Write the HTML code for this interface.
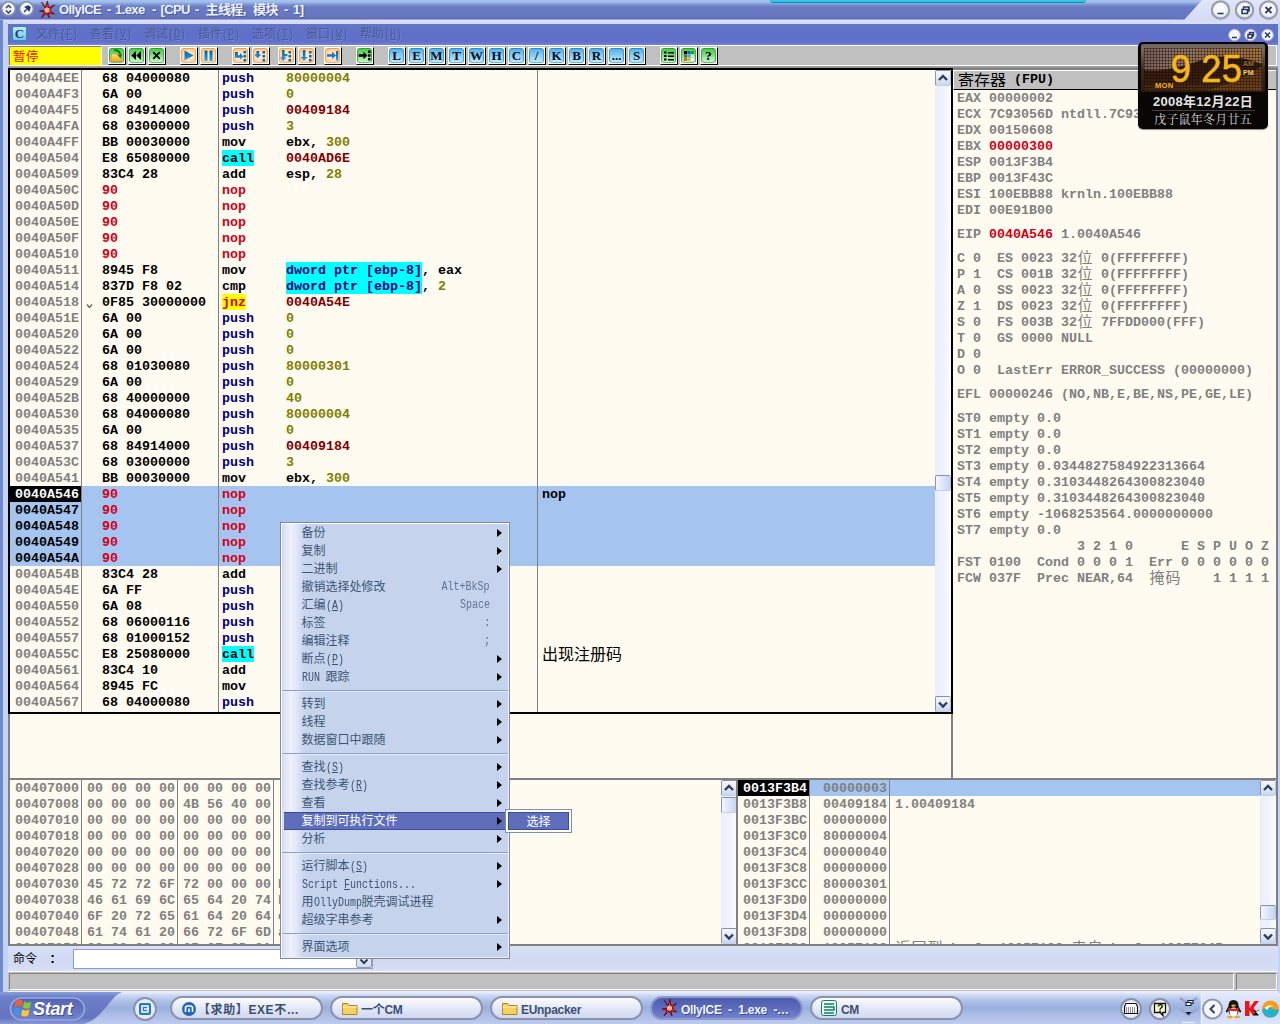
<!DOCTYPE html>
<html lang="zh-CN"><head><meta charset="utf-8"><title>OllyICE - 1.exe - [CPU - 主线程, 模块 - 1]</title>
<style>
*{margin:0;padding:0;box-sizing:border-box}
html,body{width:1280px;height:1024px;overflow:hidden}
body{position:relative;background:#c9d3f5;font-family:"Liberation Sans","Noto Sans CJK SC",sans-serif;font-size:12px;color:#000}
.a{position:absolute}
.m{position:absolute;white-space:pre;font-family:"Liberation Mono","Noto Sans CJK SC",monospace;font-weight:bold;font-size:13.3333px;letter-spacing:0;line-height:16px;height:16px}
.g{color:#808080}.k{color:#000}.b{color:#000080}.o{color:#808000}.d{color:#800000}.r{color:#d40018}.rr{color:#e00000}
.cy{background:#00ffff}.ye{background:#ffff00}
.wh{color:#fff}
.cj{position:relative;top:-2px;display:inline-block;width:16px;font-family:"Noto Sans CJK SC",sans-serif;font-weight:400;font-size:15px;letter-spacing:1px;padding-left:0.5px;text-align:left;overflow:hidden;line-height:16px;vertical-align:top}
.pane{position:absolute;background:#fffbf0;overflow:hidden}
.vl{position:absolute;width:1px;background:#808080}
.tb{position:absolute;top:47px;width:18px;height:18px;border:1px solid;border-color:#fff #000 #000 #fff;overflow:hidden;background:#fff}
.tb i{position:absolute;left:0;top:0;right:1px;bottom:1px;border-radius:3px;border:1px solid}
.tg i{background:linear-gradient(#50c850,#78d878 40%,#b4ecb4 80%,#c8f2c8);border-color:#2ca42c #40b040 #68c468}
.to i{background:radial-gradient(circle at 50% 55%,#fef0e0 0,#fcdcb8 55%,#f8bc84 100%);border-color:#f0a048 #f2a858 #f4b470}
.tl i{background:linear-gradient(#58b0e4,#80c8f0 40%,#b0e0fa 85%,#c0e8fc);border-color:#2c8cd0 #409cd8 #68b8e8}
.tb b{position:absolute;left:0;top:0;width:15px;height:15px;text-align:center;font-family:"Liberation Serif",serif;font-weight:bold;font-size:13px;line-height:15px;color:#081020}
.sb{position:absolute;width:16px;background:linear-gradient(90deg,#eceefd,#eef2ff 50%,#fcfcff)}
.sbb{position:absolute;left:0;width:16px;height:16px;border:1px solid;border-color:#8890a8 #b4c0dc #c4d0e8 #8c94ac;border-radius:2px;background:linear-gradient(#f6f8fe,#e4eaf8 50%,#c8d6ee)}
.mi{position:absolute;left:20.500px;height:18px;line-height:18px;font-size:12px;color:#3c5474;white-space:pre;font-family:"Liberation Sans","Noto Sans CJK SC",sans-serif}
.mk{position:absolute;right:19px;height:18px;line-height:18px;font-size:12px;color:#5c7494;white-space:pre;font-family:"Liberation Mono",monospace;transform:scaleX(.8333);transform-origin:100% 50%}
.l{display:inline-block;font-family:"Liberation Mono",monospace;font-size:12px;letter-spacing:0;transform:scaleX(.8333);transform-origin:0 50%}
.ma{position:absolute;left:216px;width:0;height:0;border:4px solid transparent;border-left:5px solid #000;border-right:0}
.ms{position:absolute;left:1px;right:1px;height:2px;border-top:1px solid #8ca0c4;border-bottom:1px solid #e4ecfc}
.task{position:absolute;top:996px;height:24px;width:153px;border:2px solid #8a92ac;border-radius:12px;background:linear-gradient(#fcfcff,#e4e8f8 50%,#d0d8f0);font-weight:bold;font-size:12px;color:#3c5070;line-height:20px;white-space:pre;overflow:hidden}
.task span{position:absolute;left:29px;top:1.500px;letter-spacing:-0.3px}
</style></head><body>
<div class="a" style="left:0px;top:0px;width:1280px;height:24px;background:linear-gradient(#a4c4f0 0,#a0bcec 2px,#7890cc 5px,#6a7cc4 7px,#6676c0 17px,#5c6cb0 19px,#dcdffa 20px,#d4d8f6 24px)"></div>
<div class="a" style="left:770px;top:0px;width:316px;height:3px;background:#30c8e8;border-bottom:1px solid #1088b0;border-radius:0 0 4px 4px"></div>
<svg class="a" style="left:1170px;top:0" width="110" height="24" viewBox="0 0 110 24"><defs><linearGradient id="tg1" x1="0" y1="0" x2="0" y2="1"><stop offset="0" stop-color="#e2e6fa"/><stop offset="0.800" stop-color="#d6daf5"/><stop offset="1" stop-color="#dcdffa"/></linearGradient><radialGradient id="cb" cx="0.5" cy="0.4" r="0.6"><stop offset="0" stop-color="#ffffff"/><stop offset="0.7" stop-color="#f0f2fa"/><stop offset="1" stop-color="#c8cce0"/></radialGradient></defs><path d="M14 20 L32 0 L110 0 L110 24 L0 24 L0 20 Z" fill="url(#tg1)"/><g stroke="#9a9eac" stroke-width="2.200" fill="url(#cb)"><circle cx="50.500" cy="10" r="8.700"/><circle cx="74.500" cy="10" r="8.700"/><circle cx="98.500" cy="10" r="8.700"/></g><g stroke="#283868" stroke-width="1.6" fill="none"><path d="M47.5 13.5h6"/><path d="M72 9.5h5.5v4H72z M73.5 9.5v-2.5h5.5v4h-1.500"/><path d="M95.500 7l6 6m0 -6l-6 6" stroke-width="1.800"/></g></svg>
<svg class="a" style="left:0;top:0" width="60" height="22" viewBox="0 0 60 22"><g stroke="#868ea6" stroke-width="1.600" fill="#f2f4fb"><circle cx="8.500" cy="8.700" r="6.900"/><circle cx="26.500" cy="8.700" r="6.900"/></g><path d="M6 8l2.500 -2.500l2.500 2.500M6 10.500l2.500 2.500l2.500 -2.500" stroke="#283868" stroke-width="1.400" fill="none"/><path d="M24 12l2.500 -2.500M25.500 7l3.500 3.500l1 -3l-1.500 -1.500z" stroke="#283868" stroke-width="1.400" fill="#283868"/><g transform="translate(46.500,10)"><path d="M0 0L-5 -8L-1 -2L1 -9L2 -2L8 -5L3 0L8 4L2 3L3 8L0 3L-5 8L-2 2L-7 1Z" fill="#e83030" stroke="#701010" stroke-width="1"/><circle cx="0.500" cy="0" r="2.500" fill="#ffb0a0"/></g></svg>
<div class="a" style="left:0;top:0;width:330px;height:20px;line-height:19px;font-size:13px;font-weight:bold;color:#f0f2fc;text-shadow:1px 1px 0 #4a5a9c;white-space:pre;letter-spacing:-0.600px"><span class="a" style="left:59px;top:0">OllyICE</span><span class="a" style="left:107px;top:0">-</span><span class="a" style="left:115px;top:0">1.exe</span><span class="a" style="left:152px;top:0">-</span><span class="a" style="left:160.5px;top:0">[CPU</span><span class="a" style="left:195px;top:0">-</span><span class="a" style="left:205.5px;top:0">主线程,</span><span class="a" style="left:253px;top:0">模块</span><span class="a" style="left:284px;top:0">-</span><span class="a" style="left:293px;top:0">1]</span></div>
<div class="a" style="left:0px;top:20px;width:3px;height:975px;background:#7088cc"></div>
<div class="a" style="left:3px;top:22px;width:5px;height:972px;background:#c4d2f6"></div>
<div class="a" style="left:1278px;top:22px;width:2px;height:972px;background:#c4d2f6"></div>
<div class="a" style="left:8px;top:24px;width:1270px;height:21px;background:linear-gradient(#6474c4,#6070c8 50%,#6270cc 85%,#7484d0)"></div>
<div class="a" style="left:12px;top:26px;width:15px;height:15px;border-radius:2px;border:1px solid #3088c0;background:linear-gradient(#c0ecfc,#70c4ec);font-family:'Liberation Serif',serif;font-weight:bold;font-size:13px;line-height:13px;text-align:center;color:#18406c">C</div>
<div class="a" style="left:36px;top:25px;height:18px;line-height:18px;font-size:12px;color:#4a5a98;white-space:pre;text-shadow:1px 1px 0 #7484d0">文件<span class="l" style="margin-right:-3.6px">(<u>F</u>)</span></div>
<div class="a" style="left:90px;top:25px;height:18px;line-height:18px;font-size:12px;color:#4a5a98;white-space:pre;text-shadow:1px 1px 0 #7484d0">查看<span class="l" style="margin-right:-3.6px">(<u>V</u>)</span></div>
<div class="a" style="left:144px;top:25px;height:18px;line-height:18px;font-size:12px;color:#4a5a98;white-space:pre;text-shadow:1px 1px 0 #7484d0">调试<span class="l" style="margin-right:-3.6px">(<u>D</u>)</span></div>
<div class="a" style="left:198px;top:25px;height:18px;line-height:18px;font-size:12px;color:#4a5a98;white-space:pre;text-shadow:1px 1px 0 #7484d0">插件<span class="l" style="margin-right:-3.6px">(<u>P</u>)</span></div>
<div class="a" style="left:252px;top:25px;height:18px;line-height:18px;font-size:12px;color:#4a5a98;white-space:pre;text-shadow:1px 1px 0 #7484d0">选项<span class="l" style="margin-right:-3.6px">(<u>T</u>)</span></div>
<div class="a" style="left:306px;top:25px;height:18px;line-height:18px;font-size:12px;color:#4a5a98;white-space:pre;text-shadow:1px 1px 0 #7484d0">窗口<span class="l" style="margin-right:-3.6px">(<u>W</u>)</span></div>
<div class="a" style="left:360px;top:25px;height:18px;line-height:18px;font-size:12px;color:#4a5a98;white-space:pre;text-shadow:1px 1px 0 #7484d0">帮助<span class="l" style="margin-right:-3.6px">(<u>H</u>)</span></div>
<svg class="a" style="left:1222px;top:25px" width="56" height="20" viewBox="0 0 56 20"><g stroke="#a8b0dc" stroke-width="1" fill="#f6f8ff"><circle cx="12.500" cy="10" r="5.800"/><circle cx="28.500" cy="10" r="5.800"/><circle cx="45.500" cy="10" r="5.800"/></g><g stroke="#283868" stroke-width="1.500" fill="none"><path d="M10 12.500h5"/><path d="M26 9.500h4v3.500h-4zM27.500 9.500v-2h4v3.500h-1.500"/><path d="M43 7.500l5 5m0 -5l-5 5"/></g></svg>
<div class="a" style="left:8px;top:45px;width:1270px;height:23px;background:linear-gradient(#c0c0c0 0,#c0c0c0 21px,#a8a8a8 21px,#909090 23px)"></div>
<div class="a" style="left:8px;top:45px;width:1269px;height:21px;border:1px solid #fff;border-left:0"></div>
<div class="a" style="left:9px;top:46px;width:93px;height:20px;background:#ffff00;border:1px solid;border-color:#808080 #fff #fff #808080"><div class="a" style="left:3px;top:0;font-size:12.500px;line-height:18px;color:#f01000;font-family:'Noto Sans CJK SC',sans-serif;letter-spacing:0.500px">暂停</div></div>
<svg width="0" height="0" style="position:absolute"><defs><linearGradient id="bl" x1="0" y1="0" x2="0" y2="1"><stop offset="0" stop-color="#0c6494"/><stop offset="0.600" stop-color="#1c84cc"/><stop offset="1" stop-color="#44a8ec"/></linearGradient><linearGradient id="fy" x1="0" y1="0" x2="0" y2="1"><stop offset="0" stop-color="#fce070"/><stop offset="1" stop-color="#f0a828"/></linearGradient></defs></svg><div class="tb tg" style="left:108px"><i></i><svg class="a" style="left:0;top:0" width="16" height="16" viewBox="0 0 16 16"><path d="M2 13.500V7.500q0 -2 2 -2h2.500l4 3.500h2.500v4.500z" fill="url(#fy)" stroke="#c89020" stroke-width="0.800"/><path d="M5 2.500q4.500 -1 6.500 4" stroke="#0c7810" stroke-width="2" fill="none"/><path d="M8.500 6.500h5l-2 3.500z" fill="#0c7810"/></svg></div><div class="tb tg" style="left:128px"><i></i><svg class="a" style="left:0;top:0" width="16" height="16" viewBox="0 0 16 16"><path d="M7 3v9L2.300 7.500zM12 3v9L7.300 7.500z" fill="#000"/></svg></div><div class="tb tg" style="left:148px"><i></i><svg class="a" style="left:0;top:0" width="16" height="16" viewBox="0 0 16 16"><path d="M4.200 4.200l6.600 6.600m0 -6.600l-6.600 6.600" stroke="#000" stroke-width="1.700"/></svg></div><div class="tb to" style="left:180px"><i></i><svg class="a" style="left:0;top:0" width="16" height="16" viewBox="0 0 16 16"><path d="M3.500 2.500v10l9 -5z" fill="url(#bl)"/></svg></div><div class="tb to" style="left:200px"><i></i><svg class="a" style="left:0;top:0" width="16" height="16" viewBox="0 0 16 16"><path d="M3.500 2.500h3v10.500h-3zM8.500 2.500h3v10.500h-3z" fill="url(#bl)"/></svg></div><div class="tb to" style="left:232px"><i></i><svg class="a" style="left:0;top:0" width="16" height="16" viewBox="0 0 16 16"><path d="M10.5 3h2.500v2.500h-2.500zM10.5 7h2.500v2.500h-2.500zM10.5 11h2.500v2.500h-2.500z" fill="#0c6ca8"/><path d="M2 4h2.800v3.200h2.200V5l3.300 3.500L7 12V9.800H2z" fill="url(#bl)"/></svg></div><div class="tb to" style="left:252px"><i></i><svg class="a" style="left:0;top:0" width="16" height="16" viewBox="0 0 16 16"><path d="M9.5 3h2.500v2.500h-2.500zM9.5 7h2.500v2.500h-2.500zM9.5 11h2.500v2.500h-2.500z" fill="#0c6ca8"/><path d="M3.500 3h2.600v3.500h2.200L4.800 10.500L1.300 6.500h2.200z" fill="url(#bl)"/></svg></div><div class="tb to" style="left:278px"><i></i><svg class="a" style="left:0;top:0" width="16" height="16" viewBox="0 0 16 16"><path d="M9.5 3h2.500v2.500h-2.500zM9.5 7h2.500v2.500h-2.500zM9.5 11h2.500v2.500h-2.500z" fill="#0c6ca8"/><path d="M3 2h2.500v4h3v2.300h-3v1.200h2L4.200 13L1 9.500h2z" fill="url(#bl)"/></svg></div><div class="tb to" style="left:298px"><i></i><svg class="a" style="left:0;top:0" width="16" height="16" viewBox="0 0 16 16"><path d="M10 3h2.500v2.500h-2.500zM10 7h2.500v2.500h-2.500zM10 11h2.500v2.500h-2.500z" fill="#0c6ca8"/><path d="M3.800 2h2.600v7h2.200L5 13L1.600 9h2.200z" fill="url(#bl)"/></svg></div><div class="tb to" style="left:324px"><i></i><svg class="a" style="left:0;top:0" width="16" height="16" viewBox="0 0 16 16"><path d="M2 6.300h5V3.800l4 3.700l-4 3.700V8.700H2zM11 3h2.200v9.500H11z" fill="url(#bl)"/></svg></div><div class="tb tg" style="left:356px"><i></i><svg class="a" style="left:0;top:0" width="16" height="16" viewBox="0 0 16 16"><path d="M1.500 6.300h5V3.800l4 3.700l-4 3.700V8.700h-5z" fill="#000"/><path d="M11 2.500h2.500v2.500H11zM11 6.300h2.500v2.500H11zM11 10h2.500v2.500H11z" fill="#000"/></svg></div><div class="tb tl" style="left:388px"><i></i><b>L</b></div><div class="tb tl" style="left:408px"><i></i><b>E</b></div><div class="tb tl" style="left:428px"><i></i><b>M</b></div><div class="tb tl" style="left:448px"><i></i><b>T</b></div><div class="tb tl" style="left:468px"><i></i><b>W</b></div><div class="tb tl" style="left:488px"><i></i><b>H</b></div><div class="tb tl" style="left:508px"><i></i><b>C</b></div><div class="tb tl" style="left:528px"><i></i><b>/</b></div><div class="tb tl" style="left:548px"><i></i><b>K</b></div><div class="tb tl" style="left:568px"><i></i><b>B</b></div><div class="tb tl" style="left:588px"><i></i><b>R</b></div><div class="tb tl" style="left:608px"><i></i><b>...</b></div><div class="tb tl" style="left:628px"><i></i><b>S</b></div><div class="tb tg" style="left:660px"><i></i><svg class="a" style="left:0;top:0" width="16" height="16" viewBox="0 0 16 16"><path d="M3 3.500h2.500v2H3zM3 7h2.500v2H3zM3 10.500h2.500v2H3zM7 4h6v1.500H7zM7 7.500h6V9H7zM7 11h6v1.500H7z" fill="#000"/></svg></div><div class="tb tg" style="left:680px"><i></i><svg class="a" style="left:0;top:0" width="16" height="16" viewBox="0 0 16 16"><path d="M3 3h3v3H3z" fill="#000"/><path d="M6.500 3h3v3h-3z" fill="#2060c0"/><path d="M10 3h3v3h-3z" fill="#20a020"/><path d="M3 6.500h3v3H3z" fill="#606060"/><path d="M6.500 6.500h3v3h-3z" fill="#40b0e0"/><path d="M10 6.500h3v3h-3z" fill="#e0e0e0"/><path d="M3 10h3v3H3z" fill="#e06020"/><path d="M6.500 10h3v3h-3z" fill="#e0c020"/><path d="M10 10h3v3h-3z" fill="#fff"/></svg></div><div class="tb tg" style="left:700px"><i></i><b style="color:#000">?</b></div>
<div class="a" style="left:8px;top:68px;width:945px;height:646px;background:#000"></div>
<div class="pane" style="left:10px;top:70px;width:925px;height:642px"><div class="a" style="left:0;top:416px;width:925px;height:80px;background:#a5c5f0"></div><div class="a" style="left:0;top:416px;width:71px;height:16px;background:#000"></div><div class="vl" style="left:71px;top:0;height:642px"></div><div class="vl" style="left:208px;top:0;height:642px"></div><div class="vl" style="left:527px;top:0;height:642px"></div><div class="m g" style="left:5px;top:1px;">0040A4EE</div><div class="m k" style="left:92px;top:1px;">68 04000080</div><div class="m k" style="left:212px;top:1px;"><span class="b">push</span></div><div class="m k" style="left:276px;top:1px;"><span class="o">80000004</span></div>
<div class="m g" style="left:5px;top:17px;">0040A4F3</div><div class="m k" style="left:92px;top:17px;">6A 00</div><div class="m k" style="left:212px;top:17px;"><span class="b">push</span></div><div class="m k" style="left:276px;top:17px;"><span class="o">0</span></div>
<div class="m g" style="left:5px;top:33px;">0040A4F5</div><div class="m k" style="left:92px;top:33px;">68 84914000</div><div class="m k" style="left:212px;top:33px;"><span class="b">push</span></div><div class="m k" style="left:276px;top:33px;"><span class="d">00409184</span></div>
<div class="m g" style="left:5px;top:49px;">0040A4FA</div><div class="m k" style="left:92px;top:49px;">68 03000000</div><div class="m k" style="left:212px;top:49px;"><span class="b">push</span></div><div class="m k" style="left:276px;top:49px;"><span class="o">3</span></div>
<div class="m g" style="left:5px;top:65px;">0040A4FF</div><div class="m k" style="left:92px;top:65px;">BB 00030000</div><div class="m k" style="left:212px;top:65px;"><span class="k">mov</span></div><div class="m k" style="left:276px;top:65px;"><span class="k">ebx, </span><span class="o">300</span></div>
<div class="m g" style="left:5px;top:81px;">0040A504</div><div class="m k" style="left:92px;top:81px;">E8 65080000</div><div class="a cy" style="left:212px;top:80px;width:32px;height:16px"></div><div class="m k" style="left:212px;top:81px;"><span class="k">call</span></div><div class="m k" style="left:276px;top:81px;"><span class="d">0040AD6E</span></div>
<div class="m g" style="left:5px;top:97px;">0040A509</div><div class="m k" style="left:92px;top:97px;">83C4 28</div><div class="m k" style="left:212px;top:97px;"><span class="k">add</span></div><div class="m k" style="left:276px;top:97px;"><span class="k">esp, </span><span class="o">28</span></div>
<div class="m g" style="left:5px;top:113px;">0040A50C</div><div class="m r" style="left:92px;top:113px;">90</div><div class="m k" style="left:212px;top:113px;"><span class="r">nop</span></div>
<div class="m g" style="left:5px;top:129px;">0040A50D</div><div class="m r" style="left:92px;top:129px;">90</div><div class="m k" style="left:212px;top:129px;"><span class="r">nop</span></div>
<div class="m g" style="left:5px;top:145px;">0040A50E</div><div class="m r" style="left:92px;top:145px;">90</div><div class="m k" style="left:212px;top:145px;"><span class="r">nop</span></div>
<div class="m g" style="left:5px;top:161px;">0040A50F</div><div class="m r" style="left:92px;top:161px;">90</div><div class="m k" style="left:212px;top:161px;"><span class="r">nop</span></div>
<div class="m g" style="left:5px;top:177px;">0040A510</div><div class="m r" style="left:92px;top:177px;">90</div><div class="m k" style="left:212px;top:177px;"><span class="r">nop</span></div>
<div class="m g" style="left:5px;top:193px;">0040A511</div><div class="m k" style="left:92px;top:193px;">8945 F8</div><div class="m k" style="left:212px;top:193px;"><span class="k">mov</span></div><div class="a cy" style="left:276px;top:192px;width:136px;height:16px"></div><div class="m k" style="left:276px;top:193px;"><span class="b">dword ptr [ebp-8]</span><span class="k">, eax</span></div>
<div class="m g" style="left:5px;top:209px;">0040A514</div><div class="m k" style="left:92px;top:209px;">837D F8 02</div><div class="m k" style="left:212px;top:209px;"><span class="k">cmp</span></div><div class="a cy" style="left:276px;top:208px;width:136px;height:16px"></div><div class="m k" style="left:276px;top:209px;"><span class="b">dword ptr [ebp-8]</span><span class="k">, </span><span class="o">2</span></div>
<div class="m g" style="left:5px;top:225px;">0040A518</div><div class="m k" style="left:92px;top:225px;">0F85 30000000</div><div class="a ye" style="left:212px;top:224px;width:24px;height:16px"></div><div class="m k" style="left:212px;top:225px;"><span class="rr">jnz</span></div><div class="m k" style="left:276px;top:225px;"><span class="d">0040A54E</span></div>
<div class="m g" style="left:5px;top:241px;">0040A51E</div><div class="m k" style="left:92px;top:241px;">6A 00</div><div class="m k" style="left:212px;top:241px;"><span class="b">push</span></div><div class="m k" style="left:276px;top:241px;"><span class="o">0</span></div>
<div class="m g" style="left:5px;top:257px;">0040A520</div><div class="m k" style="left:92px;top:257px;">6A 00</div><div class="m k" style="left:212px;top:257px;"><span class="b">push</span></div><div class="m k" style="left:276px;top:257px;"><span class="o">0</span></div>
<div class="m g" style="left:5px;top:273px;">0040A522</div><div class="m k" style="left:92px;top:273px;">6A 00</div><div class="m k" style="left:212px;top:273px;"><span class="b">push</span></div><div class="m k" style="left:276px;top:273px;"><span class="o">0</span></div>
<div class="m g" style="left:5px;top:289px;">0040A524</div><div class="m k" style="left:92px;top:289px;">68 01030080</div><div class="m k" style="left:212px;top:289px;"><span class="b">push</span></div><div class="m k" style="left:276px;top:289px;"><span class="o">80000301</span></div>
<div class="m g" style="left:5px;top:305px;">0040A529</div><div class="m k" style="left:92px;top:305px;">6A 00</div><div class="m k" style="left:212px;top:305px;"><span class="b">push</span></div><div class="m k" style="left:276px;top:305px;"><span class="o">0</span></div>
<div class="m g" style="left:5px;top:321px;">0040A52B</div><div class="m k" style="left:92px;top:321px;">68 40000000</div><div class="m k" style="left:212px;top:321px;"><span class="b">push</span></div><div class="m k" style="left:276px;top:321px;"><span class="o">40</span></div>
<div class="m g" style="left:5px;top:337px;">0040A530</div><div class="m k" style="left:92px;top:337px;">68 04000080</div><div class="m k" style="left:212px;top:337px;"><span class="b">push</span></div><div class="m k" style="left:276px;top:337px;"><span class="o">80000004</span></div>
<div class="m g" style="left:5px;top:353px;">0040A535</div><div class="m k" style="left:92px;top:353px;">6A 00</div><div class="m k" style="left:212px;top:353px;"><span class="b">push</span></div><div class="m k" style="left:276px;top:353px;"><span class="o">0</span></div>
<div class="m g" style="left:5px;top:369px;">0040A537</div><div class="m k" style="left:92px;top:369px;">68 84914000</div><div class="m k" style="left:212px;top:369px;"><span class="b">push</span></div><div class="m k" style="left:276px;top:369px;"><span class="d">00409184</span></div>
<div class="m g" style="left:5px;top:385px;">0040A53C</div><div class="m k" style="left:92px;top:385px;">68 03000000</div><div class="m k" style="left:212px;top:385px;"><span class="b">push</span></div><div class="m k" style="left:276px;top:385px;"><span class="o">3</span></div>
<div class="m g" style="left:5px;top:401px;">0040A541</div><div class="m k" style="left:92px;top:401px;">BB 00030000</div><div class="m k" style="left:212px;top:401px;"><span class="k">mov</span></div><div class="m k" style="left:276px;top:401px;"><span class="k">ebx, </span><span class="o">300</span></div>
<div class="m wh" style="left:5px;top:417px;">0040A546</div><div class="m r" style="left:92px;top:417px;">90</div><div class="m k" style="left:212px;top:417px;"><span class="r">nop</span></div>
<div class="m k" style="left:5px;top:433px;">0040A547</div><div class="m r" style="left:92px;top:433px;">90</div><div class="m k" style="left:212px;top:433px;"><span class="r">nop</span></div>
<div class="m k" style="left:5px;top:449px;">0040A548</div><div class="m r" style="left:92px;top:449px;">90</div><div class="m k" style="left:212px;top:449px;"><span class="r">nop</span></div>
<div class="m k" style="left:5px;top:465px;">0040A549</div><div class="m r" style="left:92px;top:465px;">90</div><div class="m k" style="left:212px;top:465px;"><span class="r">nop</span></div>
<div class="m k" style="left:5px;top:481px;">0040A54A</div><div class="m r" style="left:92px;top:481px;">90</div><div class="m k" style="left:212px;top:481px;"><span class="r">nop</span></div>
<div class="m g" style="left:5px;top:497px;">0040A54B</div><div class="m k" style="left:92px;top:497px;">83C4 28</div><div class="m k" style="left:212px;top:497px;"><span class="k">add</span></div><div class="m k" style="left:276px;top:497px;"><span class="k">esp, </span><span class="o">28</span></div>
<div class="m g" style="left:5px;top:513px;">0040A54E</div><div class="m k" style="left:92px;top:513px;">6A FF</div><div class="m k" style="left:212px;top:513px;"><span class="b">push</span></div><div class="m k" style="left:276px;top:513px;"><span class="o">-1</span></div>
<div class="m g" style="left:5px;top:529px;">0040A550</div><div class="m k" style="left:92px;top:529px;">6A 08</div><div class="m k" style="left:212px;top:529px;"><span class="b">push</span></div><div class="m k" style="left:276px;top:529px;"><span class="o">8</span></div>
<div class="m g" style="left:5px;top:545px;">0040A552</div><div class="m k" style="left:92px;top:545px;">68 06000116</div><div class="m k" style="left:212px;top:545px;"><span class="b">push</span></div><div class="m k" style="left:276px;top:545px;"><span class="o">16010006</span></div>
<div class="m g" style="left:5px;top:561px;">0040A557</div><div class="m k" style="left:92px;top:561px;">68 01000152</div><div class="m k" style="left:212px;top:561px;"><span class="b">push</span></div><div class="m k" style="left:276px;top:561px;"><span class="o">52010001</span></div>
<div class="m g" style="left:5px;top:577px;">0040A55C</div><div class="m k" style="left:92px;top:577px;">E8 25080000</div><div class="a cy" style="left:212px;top:576px;width:32px;height:16px"></div><div class="m k" style="left:212px;top:577px;"><span class="k">call</span></div><div class="m k" style="left:276px;top:577px;"><span class="d">0040AD86</span></div>
<div class="m g" style="left:5px;top:593px;">0040A561</div><div class="m k" style="left:92px;top:593px;">83C4 10</div><div class="m k" style="left:212px;top:593px;"><span class="k">add</span></div><div class="m k" style="left:276px;top:593px;"><span class="k">esp, </span><span class="o">10</span></div>
<div class="m g" style="left:5px;top:609px;">0040A564</div><div class="m k" style="left:92px;top:609px;">8945 FC</div><div class="m k" style="left:212px;top:609px;"><span class="k">mov</span></div><div class="a cy" style="left:276px;top:608px;width:136px;height:16px"></div><div class="m k" style="left:276px;top:609px;"><span class="b">dword ptr [ebp-4]</span><span class="k">, eax</span></div>
<div class="m g" style="left:5px;top:625px;">0040A567</div><div class="m k" style="left:92px;top:625px;">68 04000080</div><div class="m k" style="left:212px;top:625px;"><span class="b">push</span></div><div class="m k" style="left:276px;top:625px;"><span class="o">80000004</span></div>
<svg class="a" style="left:76px;top:232px" width="8" height="8" viewBox="0 0 8 8"><path d="M1 2.500l2.500 3l2.500 -3" stroke="#606060" stroke-width="1.200" fill="none"/></svg><div class="m k" style="left:532px;top:417px;">nop</div><div class="a" style="left:532px;top:574px;height:18px;line-height:18px;font-size:16px;font-family:'Noto Sans CJK SC',sans-serif;color:#000;white-space:pre;letter-spacing:0">出现注册码</div></div>
<div class="sb" style="left:935px;top:70px;height:642px"><div class="sbb" style="top:0"><svg width="14" height="14" viewBox="0 0 14 14" style="position:absolute;left:0;top:0"><path d="M3 9l4 -4l4 4" stroke="#2c405c" stroke-width="2.400" fill="none"/></svg></div><div class="sbb" style="top:405px;height:16px;background:linear-gradient(90deg,#f4f6ff,#c8d4f4)"></div><div class="sbb" style="top:626px"><svg width="14" height="14" viewBox="0 0 14 14" style="position:absolute;left:0;top:0"><path d="M3 5.500l4 4l4 -4" stroke="#2c405c" stroke-width="2.400" fill="none"/></svg></div></div>
<div class="a" style="left:8px;top:714px;width:945px;height:64px;background:#fffbf0;border-left:2px solid #808080"></div>
<div class="a" style="left:951px;top:68px;width:327px;height:712px;background:#808080"></div>
<div class="a" style="left:951px;top:68px;width:2px;height:646px;background:#000"></div>
<div class="pane" style="left:953px;top:70px;width:323px;height:708px"><div class="a" style="left:0;top:0;width:323px;height:20px;background:#c0c0c0;border-top:1px solid #fff;border-left:1px solid #fff;border-bottom:1px solid #000"></div><div class="m k" style="left:5px;top:2px"><span class="cj k" style="width:48px;font-size:16px;top:-1px;letter-spacing:0;padding-left:0">寄存器</span> (FPU)</div><div class="m g" style="left:4px;top:21px;">EAX 00000002</div>
<div class="m g" style="left:4px;top:37px;">ECX 7C93056D ntdll.7C93056D</div>
<div class="m g" style="left:4px;top:53px;">EDX 00150608</div>
<div class="m g" style="left:4px;top:69px;">EBX <span class="r">00000300</span></div>
<div class="m g" style="left:4px;top:85px;">ESP 0013F3B4</div>
<div class="m g" style="left:4px;top:101px;">EBP 0013F43C</div>
<div class="m g" style="left:4px;top:117px;">ESI 100EBB88 krnln.100EBB88</div>
<div class="m g" style="left:4px;top:133px;">EDI 00E91B00</div>
<div class="m g" style="left:4px;top:157px;">EIP <span class="r">0040A546</span> 1.0040A546</div>
<div class="m g" style="left:4px;top:181px;">C 0  ES 0023 32<span class="cj">位</span> 0(FFFFFFFF)</div>
<div class="m g" style="left:4px;top:197px;">P 1  CS 001B 32<span class="cj">位</span> 0(FFFFFFFF)</div>
<div class="m g" style="left:4px;top:213px;">A 0  SS 0023 32<span class="cj">位</span> 0(FFFFFFFF)</div>
<div class="m g" style="left:4px;top:229px;">Z 1  DS 0023 32<span class="cj">位</span> 0(FFFFFFFF)</div>
<div class="m g" style="left:4px;top:245px;">S 0  FS 003B 32<span class="cj">位</span> 7FFDD000(FFF)</div>
<div class="m g" style="left:4px;top:261px;">T 0  GS 0000 NULL</div>
<div class="m g" style="left:4px;top:277px;">D 0</div>
<div class="m g" style="left:4px;top:293px;">O 0  LastErr ERROR_SUCCESS (00000000)</div>
<div class="m g" style="left:4px;top:317px;">EFL 00000246 (NO,NB,E,BE,NS,PE,GE,LE)</div>
<div class="m g" style="left:4px;top:341px;">ST0 empty 0.0</div>
<div class="m g" style="left:4px;top:357px;">ST1 empty 0.0</div>
<div class="m g" style="left:4px;top:373px;">ST2 empty 0.0</div>
<div class="m g" style="left:4px;top:389px;">ST3 empty 0.0344827584922313664</div>
<div class="m g" style="left:4px;top:405px;">ST4 empty 0.3103448264300823040</div>
<div class="m g" style="left:4px;top:421px;">ST5 empty 0.3103448264300823040</div>
<div class="m g" style="left:4px;top:437px;">ST6 empty -1068253564.0000000000</div>
<div class="m g" style="left:4px;top:453px;">ST7 empty 0.0</div>
<div class="m g" style="left:4px;top:469px;">               3 2 1 0      E S P U O Z</div>
<div class="m g" style="left:4px;top:485px;">FST 0100  Cond 0 0 0 1  Err 0 0 0 0 0 0</div>
<div class="m g" style="left:4px;top:501px;">FCW 037F  Prec NEAR,64  <span class="cj" style="width:32px">掩码</span>    1 1 1 1</div>
</div>
<div class="a" style="left:8px;top:778px;width:729px;height:168px;background:#808080"></div>
<div class="pane" style="left:10px;top:780px;width:711px;height:164px"><div class="vl" style="left:71px;top:0;height:164px"></div><div class="vl" style="left:167px;top:0;height:164px"></div><div class="vl" style="left:263px;top:0;height:164px"></div><div class="m g" style="left:5px;top:1px;">00407000</div><div class="m g" style="left:77px;top:1px;">00 00 00 00</div><div class="m g" style="left:173px;top:1px;">00 00 00 00</div><div class="m g" style="left:268px;top:1px;">........</div>
<div class="m g" style="left:5px;top:17px;">00407008</div><div class="m g" style="left:77px;top:17px;">00 00 00 00</div><div class="m g" style="left:173px;top:17px;">4B 56 40 00</div><div class="m g" style="left:268px;top:17px;">....KV@.</div>
<div class="m g" style="left:5px;top:33px;">00407010</div><div class="m g" style="left:77px;top:33px;">00 00 00 00</div><div class="m g" style="left:173px;top:33px;">00 00 00 00</div><div class="m g" style="left:268px;top:33px;">........</div>
<div class="m g" style="left:5px;top:49px;">00407018</div><div class="m g" style="left:77px;top:49px;">00 00 00 00</div><div class="m g" style="left:173px;top:49px;">00 00 00 00</div><div class="m g" style="left:268px;top:49px;">........</div>
<div class="m g" style="left:5px;top:65px;">00407020</div><div class="m g" style="left:77px;top:65px;">00 00 00 00</div><div class="m g" style="left:173px;top:65px;">00 00 00 00</div><div class="m g" style="left:268px;top:65px;">........</div>
<div class="m g" style="left:5px;top:81px;">00407028</div><div class="m g" style="left:77px;top:81px;">00 00 00 00</div><div class="m g" style="left:173px;top:81px;">00 00 00 00</div><div class="m g" style="left:268px;top:81px;">........</div>
<div class="m g" style="left:5px;top:97px;">00407030</div><div class="m g" style="left:77px;top:97px;">45 72 72 6F</div><div class="m g" style="left:173px;top:97px;">72 00 00 00</div><div class="m g" style="left:268px;top:97px;">Error...</div>
<div class="m g" style="left:5px;top:113px;">00407038</div><div class="m g" style="left:77px;top:113px;">46 61 69 6C</div><div class="m g" style="left:173px;top:113px;">65 64 20 74</div><div class="m g" style="left:268px;top:113px;">Failed t</div>
<div class="m g" style="left:5px;top:129px;">00407040</div><div class="m g" style="left:77px;top:129px;">6F 20 72 65</div><div class="m g" style="left:173px;top:129px;">61 64 20 64</div><div class="m g" style="left:268px;top:129px;">o read d</div>
<div class="m g" style="left:5px;top:145px;">00407048</div><div class="m g" style="left:77px;top:145px;">61 74 61 20</div><div class="m g" style="left:173px;top:145px;">66 72 6F 6D</div><div class="m g" style="left:268px;top:145px;">ata from</div>
<div class="m g" style="left:5px;top:161px;">00407050</div><div class="m g" style="left:77px;top:161px;">20 66 69 6C</div><div class="m g" style="left:173px;top:161px;">65 2E 0D 0A</div><div class="m g" style="left:268px;top:161px;"> file...</div>
</div>
<div class="sb" style="left:721px;top:780px;height:164px"><div class="sbb" style="top:0"><svg width="14" height="14" viewBox="0 0 14 14" style="position:absolute;left:0;top:0"><path d="M3 9l4 -4l4 4" stroke="#2c405c" stroke-width="2.400" fill="none"/></svg></div><div class="sbb" style="top:17px;height:16px;background:linear-gradient(90deg,#f4f6ff,#c8d4f4)"></div><div class="sbb" style="top:148px"><svg width="14" height="14" viewBox="0 0 14 14" style="position:absolute;left:0;top:0"><path d="M3 5.500l4 4l4 -4" stroke="#2c405c" stroke-width="2.400" fill="none"/></svg></div></div>
<div class="a" style="left:736px;top:778px;width:542px;height:168px;background:#808080"></div>
<div class="pane" style="left:738px;top:780px;width:522px;height:164px"><div class="a" style="left:0;top:0;width:522px;height:16px;background:#a5c5f0"></div><div class="a" style="left:0;top:0;width:71px;height:16px;background:#000"></div><div class="vl" style="left:71px;top:0;height:164px"></div><div class="vl" style="left:151px;top:0;height:164px"></div><div class="m wh" style="left:5px;top:1px;">0013F3B4</div><div class="m g" style="left:85px;top:1px;">00000003</div>
<div class="m g" style="left:5px;top:17px;">0013F3B8</div><div class="m g" style="left:85px;top:17px;">00409184</div><div class="m g" style="left:157px;top:17px;">1.00409184</div>
<div class="m g" style="left:5px;top:33px;">0013F3BC</div><div class="m g" style="left:85px;top:33px;">00000000</div>
<div class="m g" style="left:5px;top:49px;">0013F3C0</div><div class="m g" style="left:85px;top:49px;">80000004</div>
<div class="m g" style="left:5px;top:65px;">0013F3C4</div><div class="m g" style="left:85px;top:65px;">00000040</div>
<div class="m g" style="left:5px;top:81px;">0013F3C8</div><div class="m g" style="left:85px;top:81px;">00000000</div>
<div class="m g" style="left:5px;top:97px;">0013F3CC</div><div class="m g" style="left:85px;top:97px;">80000301</div>
<div class="m g" style="left:5px;top:113px;">0013F3D0</div><div class="m g" style="left:85px;top:113px;">00000000</div>
<div class="m g" style="left:5px;top:129px;">0013F3D4</div><div class="m g" style="left:85px;top:129px;">00000000</div>
<div class="m g" style="left:5px;top:145px;">0013F3D8</div><div class="m g" style="left:85px;top:145px;">00000000</div>
<div class="m g" style="left:5px;top:161px;">0013F3DC</div><div class="m g" style="left:85px;top:161px;">10057193</div><div class="m g" style="left:157px;top:161px;"><span class="cj" style="width:48px">返回到</span> krnln.10057193 <span class="cj" style="width:32px">来自</span> krnln.100E7C45</div>
</div>
<div class="sb" style="left:1260px;top:780px;height:164px"><div class="sbb" style="top:0"><svg width="14" height="14" viewBox="0 0 14 14" style="position:absolute;left:0;top:0"><path d="M3 9l4 -4l4 4" stroke="#2c405c" stroke-width="2.400" fill="none"/></svg></div><div class="sbb" style="top:125px;height:15px;background:linear-gradient(90deg,#f4f6ff,#c8d4f4)"></div><div class="sbb" style="top:148px"><svg width="14" height="14" viewBox="0 0 14 14" style="position:absolute;left:0;top:0"><path d="M3 5.500l4 4l4 -4" stroke="#2c405c" stroke-width="2.400" fill="none"/></svg></div></div>
<div class="a" style="left:8px;top:946px;width:1270px;height:26px;background:linear-gradient(#d9e1f7,#d2daf2 40%,#d3dbf3 75%,#dae2f8)"></div>
<div class="a" style="left:8px;top:971px;width:1270px;height:1px;background:#f8f9fe"></div>
<div class="a" style="left:13px;top:949px;height:18px;line-height:18px;font-size:12px;color:#000;white-space:pre;font-family:'Noto Sans CJK SC',sans-serif">命令<b style="display:inline-block;width:18px;text-align:right;font-family:'Liberation Sans',sans-serif;font-size:14px">:</b></div><div class="a" style="left:73px;top:949px;width:300px;height:20px;background:#fff;border:1px solid #8c9cc8"></div>
<div class="a" style="left:356px;top:951px;width:16px;height:17px;border:1px solid #8c98b8;border-radius:2px;background:linear-gradient(#fdfdff,#d0daf2)"><svg width="14" height="15" viewBox="0 0 14 15" style="position:absolute;left:0;top:0"><path d="M3.500 7.500l3.500 3.500l3.500 -3.500" stroke="#2c405c" stroke-width="2" fill="none"/></svg></div>
<div class="a" style="left:8px;top:972px;width:1270px;height:20px;background:#c0c0c0"></div>
<div class="a" style="left:9px;top:973px;width:1225px;height:17px;border:1px solid;border-color:#808080 #fff #fff #808080"></div>
<div class="a" style="left:1236px;top:973px;width:41px;height:17px;border:1px solid;border-color:#808080 #fff #fff #808080"></div>
<div class="a" style="left:8px;top:991px;width:1270px;height:2px;background:#e8ecfa"></div>
<div class="a" style="left:0px;top:993px;width:1280px;height:31px;background:linear-gradient(#e0e7f9 0,#c8d5f2 3px,#aabde5 9px,#9bb0dd 15px,#a9bce5 21px,#bdcbee 31px)"></div>
<svg class="a" style="left:0;top:992px" width="140" height="32" viewBox="0 0 140 32"><defs><linearGradient id="sg" x1="0" y1="0" x2="0" y2="1"><stop offset="0" stop-color="#8aa0dc"/><stop offset="0.150" stop-color="#6c80c8"/><stop offset="0.800" stop-color="#6474c0"/><stop offset="1" stop-color="#8898d4"/></linearGradient><linearGradient id="sp" x1="0" y1="0" x2="0" y2="1"><stop offset="0" stop-color="#5464b4"/><stop offset="1" stop-color="#7484cc"/></linearGradient></defs><path d="M0 0H122C110 4 104 26 84 32H0Z" fill="url(#sg)"/><rect x="10.500" y="6" width="74" height="22" rx="11" fill="url(#sp)" stroke="#98a8e0" stroke-width="1.500"/><g transform="translate(14.500,6.500) scale(1.200)"><path d="M1 2q3 -2 6 0l-1 5q-3 -2 -6 0z" fill="#f06030"/><path d="M8 2.500q3 2 6 0l-1 5q-3 2 -6 0z" fill="#80c840"/><path d="M-0.500 8.500q3 -2 6 0l-1 5q-3 -2 -6 0z" fill="#4090f0"/><path d="M6.500 9q3 2 6 0l-1 5q-3 2 -6 0z" fill="#f8c830"/></g><text x="33" y="22.500" font-family="Liberation Sans, sans-serif" font-weight="bold" font-style="italic" font-size="18" letter-spacing="-0.300" fill="#fff" style="text-shadow:1px 1px 1px #38488c">Start</text></svg>
<svg class="a" style="left:132px;top:996px" width="26" height="26" viewBox="0 0 26 26"><circle cx="13" cy="13" r="11" fill="#e8ecfa" stroke="#8890b4" stroke-width="2"/><rect x="7" y="7" width="12" height="12" rx="2" fill="#2878c8"/><path d="M10 10h6v6h-6z" fill="none" stroke="#fff" stroke-width="1.500"/><path d="M12 13h5" stroke="#fff" stroke-width="1.500"/></svg>
<div class="task" style="left:170px;"><svg class="a" style="left:9px;top:3px" width="16" height="16" viewBox="0 0 16 16"><circle cx="8" cy="8" r="7" fill="#2068b8"/><path d="M4.500 11V7q0 -2 2 -2h3q2 0 2 2v4M8 7.500V11" stroke="#fff" stroke-width="1.600" fill="none"/></svg><span style="left:26px;letter-spacing:0.600px">【求助】EXE不…</span></div>
<div class="task" style="left:330px;"><svg class="a" style="left:9px;top:2px" width="18" height="16" viewBox="0 0 18 16"><path d="M1.500 3.500h5l1.500 2h8v9h-14.500z" fill="#f4d060" stroke="#b08820" stroke-width="1"/><path d="M1.500 7h14.500" stroke="#fff0a0" stroke-width="1"/></svg><span>一个CM</span></div>
<div class="task" style="left:490px;"><svg class="a" style="left:9px;top:2px" width="18" height="16" viewBox="0 0 18 16"><path d="M1.500 3.500h5l1.500 2h8v9h-14.500z" fill="#f4d060" stroke="#b08820" stroke-width="1"/><path d="M1.500 7h14.500" stroke="#fff0a0" stroke-width="1"/></svg><span>EUnpacker</span></div>
<div class="task" style="left:650px;background:linear-gradient(#4c5caa,#5c6cbc 50%,#7282cc);color:#f0f2ff;border-color:#8e9ad0;text-shadow:1px 1px 0 #3c4c90;"><svg class="a" style="left:8px;top:1px" width="18" height="18" viewBox="0 0 18 18"><g transform="translate(9,9)"><path d="M0 0L-5 -8L-1 -2L1 -9L2 -2L8 -5L3 0L8 4L2 3L3 8L0 3L-5 8L-2 2L-7 1Z" fill="#e83030" stroke="#701010" stroke-width="1"/><circle cx="0.500" cy="0" r="2.500" fill="#ffb0a0"/></g></svg><span style="word-spacing:3.500px">OllyICE - 1.exe -…</span></div>
<div class="task" style="left:810px;"><svg class="a" style="left:9px;top:2px" width="16" height="16" viewBox="0 0 16 16"><rect x="0.500" y="0.500" width="15" height="15" rx="2" fill="#e8f8f0" stroke="#108068" stroke-width="1"/><path d="M3 4h10M3 7h10v3H3M3 13h10" stroke="#108068" stroke-width="1.500" fill="none"/></svg><span>CM</span></div>
<svg class="a" style="left:1110px;top:993px" width="170" height="31" viewBox="0 1 170 31"><defs><linearGradient id="trg" x1="0" y1="0" x2="0" y2="1"><stop offset="0" stop-color="#e4eafc"/><stop offset="0.500" stop-color="#d0daf6"/><stop offset="1" stop-color="#dce4fa"/></linearGradient></defs><rect x="92" y="1" width="78" height="31" fill="url(#trg)"/><path d="M91.500 1V32" stroke="#eef2fc" stroke-width="1.500"/><g stroke="#8890a8" stroke-width="2" fill="#e8ecf8"><circle cx="21" cy="17" r="10"/><circle cx="50" cy="17" r="10"/></g><circle cx="102.500" cy="17" r="9.500" stroke="#9098b0" stroke-width="2" fill="#f4f6fc"/><path d="M14.500 14.500l1.500 -3h10l1.500 3v7h-13z" fill="#fff" stroke="#101010" stroke-width="1.200"/><path d="M16 16h10M16 18h10M16 20h10" stroke="#202020" stroke-width="1" stroke-dasharray="1 1"/><path d="M44.500 11.500h11v9h-3l0.500 3l-3 -3h-5.500z" fill="#ffffc8" stroke="#101010" stroke-width="1.300"/><text x="47" y="20" font-family="Liberation Sans, sans-serif" font-weight="bold" font-size="10.500" fill="#101010">?</text><path d="M70 6l8.500 6l8.500 -6M70 17l8.500 6l8.500 -6" stroke="#98a4c8" stroke-width="2.500" fill="none"/><path d="M76 10.500h5v3h-5zM78 10v-1.500h5v3h-1.500" fill="#f4f6fc" stroke="#182040" stroke-width="1.100"/><path d="M75.500 20h6l-3 3z" fill="#101020"/><path d="M72 30.500h13" stroke="#e8ecfa" stroke-width="1.500"/><path d="M104.500 13l-4 4l4 4" stroke="#304070" stroke-width="2" fill="none"/><g transform="translate(123.500,17)"><path d="M-5 -3q0 -6 5 -6t5 6l2.500 5q1 2 -1.500 1l-1 -1.500q0 4 -3 5h-4q-3 -1 -3 -5l-1 1.500q-2.500 1 -1.500 -1z" fill="#141414"/><ellipse cx="0" cy="3" rx="4" ry="4.500" fill="#fff"/><path d="M-5 -1.500q5 2.500 10 0l0.500 2.500q-5.500 2.500 -11 0z" fill="#e42020"/><ellipse cx="0" cy="-3.300" rx="2.300" ry="1.100" fill="#f8b020"/><ellipse cx="-3.500" cy="8" rx="3" ry="1.300" fill="#f8a020"/><ellipse cx="3.500" cy="8" rx="3" ry="1.300" fill="#f8a020"/></g><path d="M135 9h4.500v7l5 -7h4.500l-5.500 7l3 4.500l-3.500 3l-3.500 -5v5.500h-4.500z" fill="#e41818"/><path d="M143 18l5.500 4.500v-3.500h-2zM148.500 17.500v6h-6z" fill="#101010"/><g transform="translate(160.500,17)"><circle cx="0" cy="0" r="8.500" fill="#f0a020"/><path d="M-8.500 1q4 -5 9 -2t8 1q-1 8.500 -8.500 8.500t-8.500 -7.500z" fill="#28b0c8"/><path d="M-6 -1q4 -4 9 -2q-5 0 -6 4z" fill="#fff8e0"/></g></svg>
<div class="a" style="left:280px;top:522px;width:230px;height:437px;border:1px solid #80889c;background:linear-gradient(90deg,#ccd9f3 0,#e4e7f9 5px,#f0f0fc 10px,#dfe5f7 16px,#cad7ef 22px,#c5d4ec 28px,#c5d4ec 100%);box-shadow:inset 1px 1px 0 #fff,inset -1px -1px 0 #e8eefa"><div class="mi" style="top:1px;">备份</div><div class="ma" style="top:6px"></div>
<div class="mi" style="top:19px;">复制</div><div class="ma" style="top:24px"></div>
<div class="mi" style="top:37px;">二进制</div><div class="ma" style="top:42px"></div>
<div class="mi" style="top:55px;">撤销选择处修改</div><div class="mk" style="top:55px">Alt+BkSp</div>
<div class="mi" style="top:73px;">汇编<span class="l" style="margin-right:-3.6px">(<u>A</u>)</span></div><div class="mk" style="top:73px">Space</div>
<div class="mi" style="top:91px;">标签</div><div class="mk" style="top:91px">:</div>
<div class="mi" style="top:109px;">编辑注释</div><div class="mk" style="top:109px">;</div>
<div class="mi" style="top:127px;">断点<span class="l" style="margin-right:-3.6px">(<u>P</u>)</span></div><div class="ma" style="top:132px"></div>
<div class="mi" style="top:145px;"><span class="l" style="margin-right:-4.8px">RUN </span>跟踪</div><div class="ma" style="top:150px"></div>
<div class="ms" style="top:167px"></div><div class="mi" style="top:172px;">转到</div><div class="ma" style="top:177px"></div>
<div class="mi" style="top:190px;">线程</div><div class="ma" style="top:195px"></div>
<div class="mi" style="top:208px;">数据窗口中跟随</div><div class="ma" style="top:213px"></div>
<div class="ms" style="top:230px"></div><div class="mi" style="top:235px;">查找<span class="l" style="margin-right:-3.6px">(<u>S</u>)</span></div><div class="ma" style="top:240px"></div>
<div class="mi" style="top:253px;">查找参考<span class="l" style="margin-right:-3.6px">(<u>R</u>)</span></div><div class="ma" style="top:258px"></div>
<div class="mi" style="top:271px;">查看</div><div class="ma" style="top:276px"></div>
<div class="a" style="left:3px;top:289px;width:221px;height:18px;background:#5e6eba;border:1px solid #3c4c98;border-left:0;border-right:0"></div><div class="mi" style="top:289px;color:#fff;">复制到可执行文件</div><div class="ma" style="top:294px"></div>
<div class="mi" style="top:307px;">分析</div><div class="ma" style="top:312px"></div>
<div class="ms" style="top:329px"></div><div class="mi" style="top:334px;">运行脚本<span class="l" style="margin-right:-3.6px">(<u>S</u>)</span></div><div class="ma" style="top:339px"></div>
<div class="mi" style="top:352px;"><span class="l" style="margin-right:-22.8px">Script <u>F</u>unctions...</span></div><div class="ma" style="top:357px"></div>
<div class="mi" style="top:370px;">用<span class="l" style="margin-right:-9.6px">OllyDump</span>脱壳调试进程</div>
<div class="mi" style="top:388px;">超级字串参考</div><div class="ma" style="top:393px"></div>
<div class="ms" style="top:410px"></div><div class="mi" style="top:415px;">界面选项</div><div class="ma" style="top:420px"></div>
</div>
<div class="a" style="left:505px;top:809px;width:67px;height:24px;border:1px solid #7c90b4;background:#fff;padding:2px"><div style="width:61px;height:18px;background:#5e6eba;border:1px solid #3c4c98;color:#fff;font-size:12px;line-height:16px;text-align:center;font-family:'Noto Sans CJK SC',sans-serif">选择</div></div>
<div class="a" style="left:1138px;top:42px;width:130px;height:87px;background:#0a0606;border-radius:5px;box-shadow:0 1px 1px rgba(0,0,0,.45)"><div class="a" style="left:3px;top:2px;width:124px;height:48px;border-radius:2px;background:linear-gradient(#6c6260 0,#766a64 4px,#6a5648 12px,#3c2818 26px,#2a1a10 48px)"></div><div class="a" style="left:6px;top:6px;width:118px;height:43px;overflow:hidden;background:linear-gradient(90deg,#78625a 0,#907468 30%,#987050 70%,#a47440 100%)"><svg class="a" style="left:0;top:0" width="118" height="43" viewBox="0 0 118 43"><defs><linearGradient id="lg1" x1="0" y1="0" x2="0" y2="1"><stop offset="0" stop-color="#301a0c"/><stop offset="1" stop-color="#3e220e"/></linearGradient><linearGradient id="lg2" x1="0" y1="0" x2="1" y2="0"><stop offset="0" stop-color="#5a3a20"/><stop offset="1" stop-color="#8a5424"/></linearGradient></defs><path d="M0 43V22C20 24 40 18 58 12C78 6 96 8 118 16V43Z" fill="url(#lg1)"/><path d="M0 43V36H118V43Z" fill="url(#lg2)" opacity="0.300"/><path d="M60 43C80 38 100 30 118 18V43Z" fill="#7c4a20" opacity="0.700"/></svg><div class="a" style="left:0;top:0;width:118px;height:43px;background-image:linear-gradient(rgba(24,10,2,.42) 1px,transparent 1px),linear-gradient(90deg,rgba(24,10,2,.42) 1px,transparent 1px);background-size:3px 3px"></div></div><div style="position:absolute;left:32px;top:16px;height:28px;white-space:pre;font-family:'Liberation Mono',monospace;font-weight:normal;font-size:40px;line-height:28px;color:#f4b61c;-webkit-text-stroke:0.600px #f4b61c;letter-spacing:-1.500px;word-spacing:-11.500px;transform:scaleX(.91);transform-origin:0 0;text-shadow:0 0 2px #7a4a00">9 25</div><div class="a" style="left:17px;top:40px;font-size:7.500px;line-height:8px;color:#f0b030;font-weight:bold;letter-spacing:0.300px">MON</div><div class="a" style="left:105px;top:18px;font-size:7px;line-height:8px;color:#8a6438;font-weight:bold">AM</div><div class="a" style="left:105px;top:27px;font-size:7px;line-height:8px;color:#f8d060;font-weight:bold">PM</div><div class="a" style="left:0;top:52px;width:130px;height:16px;line-height:16px;text-align:center;font-size:13px;font-weight:bold;color:#e4e4e4;white-space:pre;letter-spacing:0.300px;font-family:'Liberation Sans','Noto Sans CJK SC',sans-serif">2008年12月22日</div><div class="a" style="left:14px;top:68px;width:103px;height:1px;background:#484040"></div><div class="a" style="left:0;top:69px;width:130px;height:16px;line-height:16px;text-align:center;font-size:12px;color:#d8d8d8;white-space:pre;font-family:'Noto Serif CJK SC',serif;letter-spacing:0.200px">戊子鼠年冬月廿五</div></div>
</body></html>
